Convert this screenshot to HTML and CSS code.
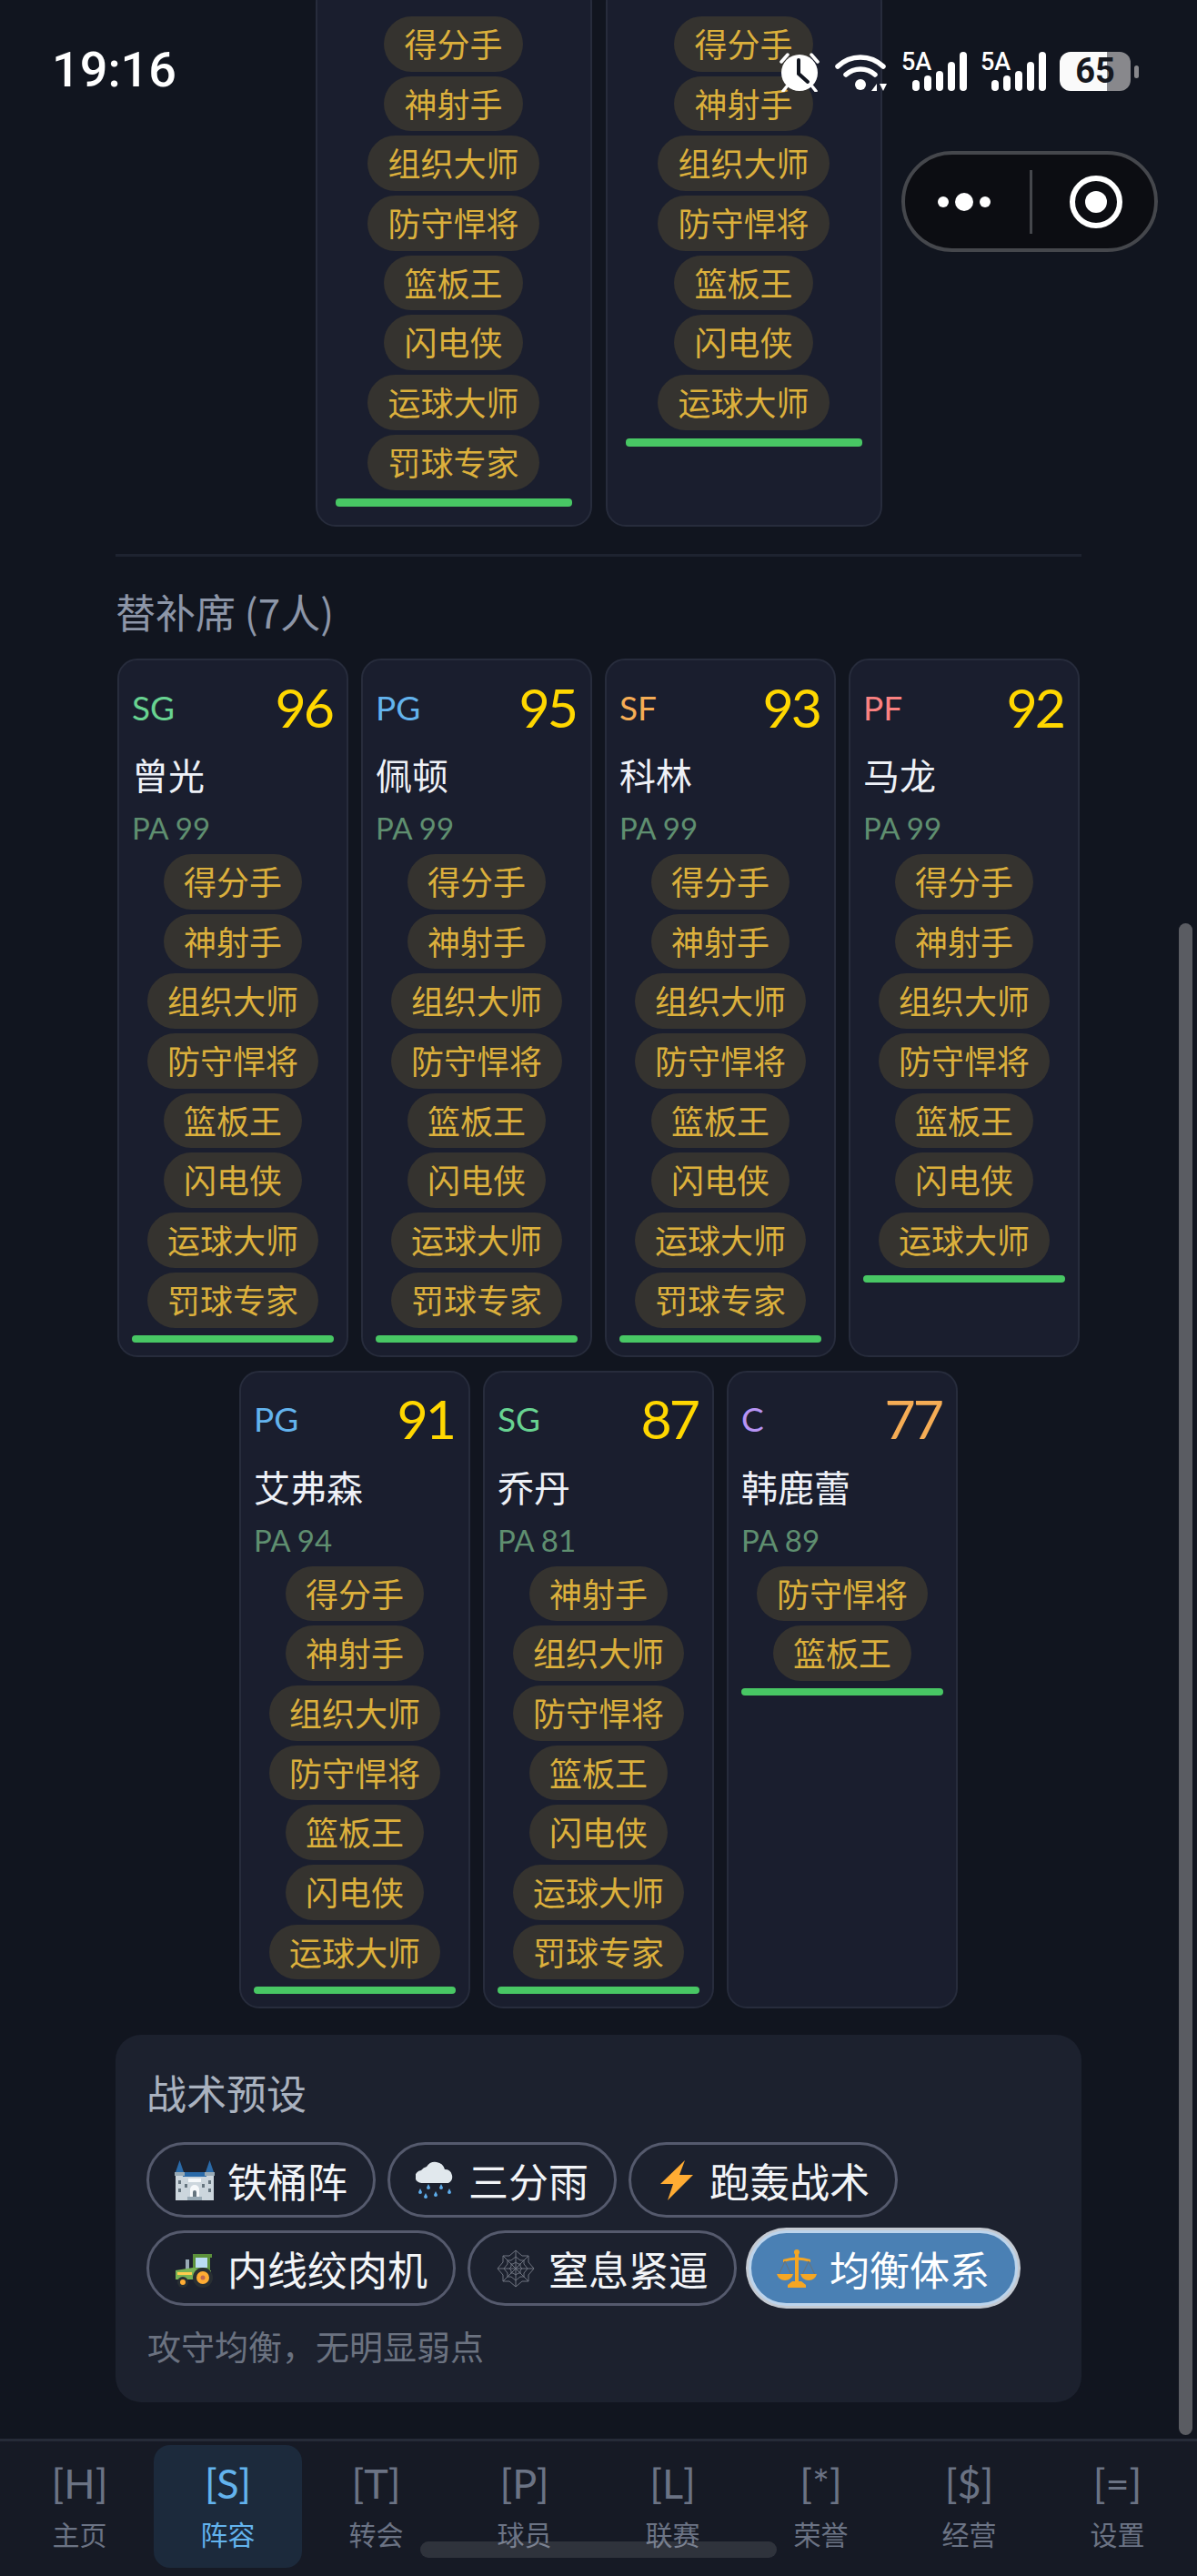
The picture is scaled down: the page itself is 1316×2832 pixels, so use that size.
FILE: index.html
```html
<!DOCTYPE html>
<html lang="zh-CN">
<head>
    <meta charset="UTF-8">
    <title>阵容</title>
    <link rel="stylesheet" href="styles.css">
</head>
<body>
<div class="screen">
    <!-- scrolled content, the starters are cut off at the top -->
    <main class="content">
        <div class="starters">
            <div class="card wide">
                <div class="skills">
                    <span class="skill">得分手</span><span class="skill">神射手</span><span class="skill">组织大师</span><span class="skill">防守悍将</span><span class="skill">篮板王</span><span class="skill">闪电侠</span><span class="skill">运球大师</span><span class="skill">罚球专家</span>
                </div>
                <div class="bar"></div>
            </div>
            <div class="card wide">
                <div class="skills">
                    <span class="skill">得分手</span><span class="skill">神射手</span><span class="skill">组织大师</span><span class="skill">防守悍将</span><span class="skill">篮板王</span><span class="skill">闪电侠</span><span class="skill">运球大师</span>
                </div>
                <div class="bar"></div>
            </div>
        </div>

        <div class="divider"></div>
        <h2 class="bench-title">替补席 (7人)</h2>

        <div class="bench">
            <div class="card">
                <div class="card-head"><span class="pos sg">SG</span><span class="rating">96</span></div>
                <div class="name">曾光</div>
                <div class="pa">PA 99</div>
                <div class="skills">
                    <span class="skill">得分手</span><span class="skill">神射手</span><span class="skill">组织大师</span><span class="skill">防守悍将</span><span class="skill">篮板王</span><span class="skill">闪电侠</span><span class="skill">运球大师</span><span class="skill">罚球专家</span>
                </div>
                <div class="bar"></div>
            </div>
            <div class="card">
                <div class="card-head"><span class="pos pg">PG</span><span class="rating">95</span></div>
                <div class="name">佩顿</div>
                <div class="pa">PA 99</div>
                <div class="skills">
                    <span class="skill">得分手</span><span class="skill">神射手</span><span class="skill">组织大师</span><span class="skill">防守悍将</span><span class="skill">篮板王</span><span class="skill">闪电侠</span><span class="skill">运球大师</span><span class="skill">罚球专家</span>
                </div>
                <div class="bar"></div>
            </div>
            <div class="card">
                <div class="card-head"><span class="pos sf">SF</span><span class="rating">93</span></div>
                <div class="name">科林</div>
                <div class="pa">PA 99</div>
                <div class="skills">
                    <span class="skill">得分手</span><span class="skill">神射手</span><span class="skill">组织大师</span><span class="skill">防守悍将</span><span class="skill">篮板王</span><span class="skill">闪电侠</span><span class="skill">运球大师</span><span class="skill">罚球专家</span>
                </div>
                <div class="bar"></div>
            </div>
            <div class="card">
                <div class="card-head"><span class="pos pf">PF</span><span class="rating">92</span></div>
                <div class="name">马龙</div>
                <div class="pa">PA 99</div>
                <div class="skills">
                    <span class="skill">得分手</span><span class="skill">神射手</span><span class="skill">组织大师</span><span class="skill">防守悍将</span><span class="skill">篮板王</span><span class="skill">闪电侠</span><span class="skill">运球大师</span>
                </div>
                <div class="bar"></div>
            </div>
            <div class="card">
                <div class="card-head"><span class="pos pg">PG</span><span class="rating">91</span></div>
                <div class="name">艾弗森</div>
                <div class="pa">PA 94</div>
                <div class="skills">
                    <span class="skill">得分手</span><span class="skill">神射手</span><span class="skill">组织大师</span><span class="skill">防守悍将</span><span class="skill">篮板王</span><span class="skill">闪电侠</span><span class="skill">运球大师</span>
                </div>
                <div class="bar"></div>
            </div>
            <div class="card">
                <div class="card-head"><span class="pos sg">SG</span><span class="rating">87</span></div>
                <div class="name">乔丹</div>
                <div class="pa">PA 81</div>
                <div class="skills">
                    <span class="skill">神射手</span><span class="skill">组织大师</span><span class="skill">防守悍将</span><span class="skill">篮板王</span><span class="skill">闪电侠</span><span class="skill">运球大师</span><span class="skill">罚球专家</span>
                </div>
                <div class="bar"></div>
            </div>
            <div class="card">
                <div class="card-head"><span class="pos c">C</span><span class="rating low">77</span></div>
                <div class="name">韩鹿蕾</div>
                <div class="pa">PA 89</div>
                <div class="skills">
                    <span class="skill">防守悍将</span><span class="skill">篮板王</span>
                </div>
                <div class="bar"></div>
            </div>
        </div>

        <section class="presets">
            <h3 class="presets-title">战术预设</h3>
            <div class="preset-list">
                <button class="preset">
                    <svg class="emoji" viewBox="0 0 44 44">
                        <path d="M1 44V16h42v28z" fill="#ccd6dd"/>
                        <path d="M9 13h26v5H9z" fill="#2a6aa8"/>
                        <path d="M1 13 5.500 0 10 13zM34 13 38.500 0 43 13z" fill="#2a6aa8"/>
                        <path d="M0 13h11v4H0zM33 13h11v4H33z" fill="#99aab5"/>
                        <path d="M17 44V32a5 5 0 0 1 10 0v12z" fill="#f5f8fa"/>
                        <path d="M20 44v-9a2 2 0 0 1 4 0v9z" fill="#66757f"/>
                        <path d="M14 40h16v4H14z" fill="#99aab5"/>
                        <path d="M15 20h14v4H15z" fill="#f5f8fa"/>
                        <path d="M4 22h3v4H4zM37 22h3v4h-3zM4 31h3v4H4zM37 31h3v4h-3zM11 26h3v4h-3zM30 26h3v4h-3z" fill="#66757f"/>
                    </svg>
                    铁桶阵
                </button>
                <button class="preset">
                    <svg class="emoji" viewBox="0 0 44 44">
                        <path d="M7 25a7 7 0 0 1-1-14 10 10 0 0 1 6-4 11 11 0 0 1 20 3 8 8 0 0 1 4 15z" fill="#e1e8ed"/>
                        <path d="M3 35l2-4 2 4a2 2 0 1 1-4 0zM12 30l2-4 2 4a2 2 0 1 1-4 0zM20 38l2-4 2 4a2 2 0 1 1-4 0zM26 30l2-4 2 4a2 2 0 1 1-4 0zM35 35l2-4 2 4a2 2 0 1 1-4 0zM9 40l2-4 2 4a2 2 0 1 1-4 0z" fill="#5dadec"/>
                    </svg>
                    三分雨
                </button>
                <button class="preset">
                    <svg class="emoji" viewBox="0 0 44 44">
                        <path d="M31 0 4 26h14l-6 18 28-28H25z" fill="#ffac33"/>
                    </svg>
                    跑轰战术
                </button>
                <button class="preset">
                    <svg class="emoji" viewBox="0 0 44 44">
                        <path d="M20 6h21v4h-2v14H20z" fill="#5c913b"/>
                        <path d="M23 10h13v11H23z" fill="#bbddf5"/>
                        <path d="M12 12h4v12h-4z" fill="#99aab5"/>
                        <path d="M1 24l19-3 20 3v10H1z" fill="#77b255"/>
                        <path d="M3 26h16v3H3z" fill="#ffcc4d"/>
                        <circle cx="31" cy="32" r="11" fill="#292f33"/>
                        <circle cx="31" cy="32" r="7" fill="#ffac33"/>
                        <circle cx="31" cy="32" r="2.500" fill="#c1694f"/>
                        <circle cx="9" cy="37" r="6" fill="#292f33"/>
                        <circle cx="9" cy="37" r="3" fill="#ffac33"/>
                    </svg>
                    内线绞肉机
                </button>
                <button class="preset">
                    <svg class="emoji web" viewBox="0 0 44 44">
                        <path d="M22 2v40M2 22h40M8 8l28 28M36 8 8 36"/>
                        <path d="M22 2 29 8h7v7l6 7-6 7v7h-7l-7 6-7-6H8v-7L2 22l6-7V8h7z"/>
                        <path d="M22 9l5 4h4v4l4 5-4 5v4h-4l-5 4-5-4h-4v-4l-4-5 4-5v-4h4z"/>
                        <path d="M22 15l3 2h2v3l2 2-2 2v3h-2l-3 2-3-2h-2v-3l-2-2 2-2v-3h2z"/>
                    </svg>
                    窒息紧逼
                </button>
                <button class="preset active">
                    <svg class="emoji" viewBox="0 0 44 44">
                        <circle cx="22" cy="4" r="3" fill="#f5a623"/>
                        <path d="M20 4h4v34h-4zM12 40l5-4h10l5 4v3H12z" fill="#f5a623"/>
                        <path d="M7 12q15-5 30 0v3q-15-5-30 0z" fill="#f5a623"/>
                        <path d="M9 14 2 29M9 14l7 15M35 14l-7 15M35 14l7 15" stroke="#66757f" stroke-width="1.200" fill="none"/>
                        <path d="M0 28h18q-2 7-9 7t-9-7zM26 28h18q-2 7-9 7t-9-7z" fill="#f5a623"/>
                    </svg>
                    均衡体系
                </button>
            </div>
            <p class="preset-desc">攻守均衡，无明显弱点</p>
        </section>
    </main>

    <nav class="tabbar">
        <a class="tab"><span class="tab-icon">[H]</span><span class="tab-label">主页</span></a>
        <a class="tab active"><span class="tab-icon">[S]</span><span class="tab-label">阵容</span></a>
        <a class="tab"><span class="tab-icon">[T]</span><span class="tab-label">转会</span></a>
        <a class="tab"><span class="tab-icon">[P]</span><span class="tab-label">球员</span></a>
        <a class="tab"><span class="tab-icon">[L]</span><span class="tab-label">联赛</span></a>
        <a class="tab"><span class="tab-icon">[*]</span><span class="tab-label">荣誉</span></a>
        <a class="tab"><span class="tab-icon">[$]</span><span class="tab-label">经营</span></a>
        <a class="tab"><span class="tab-icon">[=]</span><span class="tab-label">设置</span></a>
    </nav>

    <div class="scrollbar"></div>
    <div class="home-bar"></div>

    <!-- phone status bar -->
    <div class="statusbar">
        <span class="clock">19:16</span>
        <div class="status-icons">
            <svg class="alarm" viewBox="0 0 44 44">
                <path d="M2 11 9 3M42 11l-7-8M8 38l-4 5M36 38l4 5" stroke="#fff" stroke-width="3.500" stroke-linecap="round"/>
                <circle cx="22" cy="23" r="20" fill="#fff"/>
                <path d="M21 9v15l10 9" stroke="#11151f" stroke-width="4" fill="none" stroke-linecap="round"/>
            </svg>
            <svg class="wifi" viewBox="0 0 58 44">
                <path d="M3 16a36 36 0 0 1 50 0M12 25a24 24 0 0 1 32 0" stroke="#fff" stroke-width="5.500" fill="none" stroke-linecap="round"/>
                <circle cx="28" cy="36" r="6" fill="#fff"/>
                <path d="M40 43l6-8v8zM49 35h8l-4 8z" fill="#fff"/>
            </svg>
            <div class="signal">
                <span class="net">5A</span>
                <span class="sig s1"></span><span class="sig s2"></span><span class="sig s3"></span><span class="sig s4"></span><span class="sig s5"></span>
            </div>
            <div class="signal">
                <span class="net">5A</span>
                <span class="sig s1"></span><span class="sig s2"></span><span class="sig s3"></span><span class="sig s4"></span><span class="sig s5"></span>
            </div>
            <div class="battery"><span class="battery-num">65</span></div>
            <span class="battery-nub"></span>
        </div>
    </div>

    <!-- mini program capsule -->
    <div class="capsule">
        <div class="capsule-dots"><span class="dot"></span><span class="dot big"></span><span class="dot"></span></div>
        <span class="capsule-line"></span>
        <div class="capsule-rec"><span class="rec-inner"></span></div>
    </div>
</div>
</body>
</html>
```
FILE: styles.css
```css
* {
    box-sizing: border-box;
}
body {
    margin: 0;
    background-color: #11151f;
    font-family: "Noto Sans CJK SC", sans-serif;
}
.screen {
    position: relative;
    width: 1316px;
    height: 2832px;
    overflow: hidden;
    display: flex;
    flex-direction: column;
}
.content {
    flex: 1;
    padding: 0 127px;
    overflow: hidden;
}

/* starters */
.starters {
    display: flex;
    justify-content: center;
    gap: 15px;
    margin-top: -20px;
}
.card {
    width: 254px;
    padding: 20px 14px 14px;
    display: flex;
    flex-direction: column;
    background-color: #1a1e2e;
    border: 2px solid #272c3c;
    border-radius: 22px;
}
.card.wide {
    width: 304px;
    height: 599px;
    padding: 36px 20px 0;
}
.divider {
    height: 3px;
    margin-top: 30px;
    background-color: #1e2330;
}
.bench-title {
    margin: 31px 0 23px;
    font-size: 44px;
    line-height: 58px;
    font-weight: 400;
    color: #8d96a8;
}

/* bench */
.bench {
    display: flex;
    flex-wrap: wrap;
    justify-content: center;
    gap: 15px 14px;
}
.card-head {
    display: flex;
    justify-content: space-between;
    align-items: center;
    height: 62px;
}
.pos {
    font-family: Lato, sans-serif;
    font-size: 37px;
    font-weight: 400;
}
.pos.sg { color: #68d391; }
.pos.pg { color: #63b3ed; }
.pos.sf { color: #f6ad55; }
.pos.pf { color: #fc8181; }
.pos.c { color: #b794f4; }
.rating {
    margin-right: 2px;
    font-family: Lato, sans-serif;
    font-size: 59px;
    font-weight: 400;
    color: #ffd700;
    letter-spacing: -3px;
}
.rating.low {
    color: #f6ad55;
}
.name {
    margin-top: 14px;
    font-size: 40px;
    line-height: 58px;
    color: #eef1f7;
}
.pa {
    margin-top: 10px;
    font-family: Lato, sans-serif;
    font-size: 33px;
    font-weight: 400;
    line-height: 40px;
    color: #5f8f70;
}
.skills {
    margin-top: 9px;
    display: flex;
    flex-direction: column;
    align-items: center;
    gap: 5px;
}
.card.wide .skills {
    margin-top: 0;
}
.skill {
    height: 60.7px;
    padding: 0 22px;
    border-radius: 31px;
    background-color: #35332f;
    color: #dcb03c;
    font-size: 36px;
    line-height: 59px;
    white-space: nowrap;
}
.bar {
    height: 8px;
    margin-top: 8px;
    flex-shrink: 0;
    border-radius: 4px;
    background-color: #48c764;
}
.card.wide .bar {
    height: 9px;
    margin-top: 9px;
}

/* presets */
.presets {
    margin-top: 29px;
    height: 404px;
    padding: 33px 34px 0;
    background-color: #1c212e;
    border-radius: 28px;
}
.presets-title {
    margin: 0;
    font-size: 44px;
    line-height: 60px;
    font-weight: 400;
    color: #aab2bf;
}
.preset-list {
    margin-top: 25px;
    display: flex;
    flex-wrap: wrap;
    gap: 14px 13px;
}
.preset {
    height: 83px;
    padding: 0 28px;
    display: flex;
    align-items: center;
    gap: 14px;
    background: transparent;
    border: 3px solid #555a6d;
    border-radius: 42px;
    color: #f2f4f7;
    font-family: inherit;
    font-size: 44px;
    white-space: nowrap;
}
.preset.active {
    background-color: #4a80b4;
    border-color: #bcd4ec;
    box-shadow: 0 0 0 3px #c4cad2;
    color: #fff;
}
.emoji {
    width: 44px;
    height: 44px;
    flex-shrink: 0;
}
.web {
    fill: none;
    stroke: #6f7480;
    stroke-width: 1;
}
.preset-desc {
    margin: 18px 0 0 1px;
    font-size: 37px;
    line-height: 52px;
    color: #6b7280;
}

/* bottom tabs */
.tabbar {
    flex-shrink: 0;
    height: 151px;
    padding: 4px 6px 9px;
    display: flex;
    background-color: #161a25;
    border-top: 3px solid #262b38;
}
.tab {
    width: 163px;
    padding-top: 15px;
    display: flex;
    flex-direction: column;
    align-items: center;
    border-radius: 18px;
    color: #6b7384;
}
.tab.active {
    background-color: #1c2a3c;
    color: #63b3ed;
}
.tab-icon {
    font-family: Lato, sans-serif;
    font-size: 45px;
    font-weight: 400;
    line-height: 54px;
}
.tab-label {
    margin-top: 8px;
    font-size: 30px;
    line-height: 40px;
}
.scrollbar {
    position: absolute;
    left: 1296px;
    top: 1015px;
    width: 15px;
    height: 1662px;
    border-radius: 8px;
    background-color: #5a5c62;
}
.home-bar {
    position: absolute;
    left: 462px;
    top: 2794px;
    width: 392px;
    height: 18px;
    border-radius: 9px;
    background-color: rgba(255,255,255,0.11);
}

/* status bar */
.statusbar {
    position: absolute;
    left: 0;
    top: 0;
    width: 100%;
}
.clock {
    position: absolute;
    left: 57px;
    top: 45px;
    font-family: Roboto, sans-serif;
    font-size: 54px;
    line-height: 64px;
    font-weight: 500;
    color: #fff;
}
.status-icons {
    position: absolute;
    left: 857px;
    top: 57px;
    height: 43px;
    display: flex;
    align-items: flex-start;
}
.alarm {
    width: 44px;
    height: 44px;
}
.wifi {
    width: 58px;
    height: 44px;
    margin-left: 17px;
}
.signal {
    position: relative;
    width: 72px;
    height: 43px;
    margin-left: 15px;
    display: flex;
    align-items: flex-end;
    justify-content: flex-end;
    gap: 5px;
}
.net {
    position: absolute;
    left: 0;
    top: -3px;
    font-family: Roboto, sans-serif;
    font-size: 27px;
    line-height: 28px;
    font-weight: 500;
    color: #fff;
}
.sig {
    width: 8px;
    border-radius: 4px;
    background-color: #fff;
}
.s1 { height: 12px; }
.s2 { height: 17px; }
.s3 { height: 22px; }
.s4 { height: 32px; }
.s5 { height: 43px; }
.battery {
    width: 78px;
    height: 43px;
    margin-left: 15px;
    border-radius: 12px;
    background: linear-gradient(to right, #fafafa 67%, #88888c 67%);
    text-align: center;
}
.battery-num {
    font-family: Roboto, sans-serif;
    font-size: 38px;
    line-height: 43px;
    font-weight: 700;
    color: #16181f;
}
.battery-nub {
    width: 5px;
    height: 14px;
    margin: 15px 0 0 4px;
    border-radius: 3px;
    background-color: #88888c;
}

/* capsule */
.capsule {
    position: absolute;
    left: 991px;
    top: 166px;
    width: 282px;
    height: 111px;
    display: flex;
    align-items: center;
    background-color: #0c0d12;
    border: 4px solid #45474c;
    border-radius: 56px;
}
.capsule-dots {
    width: 137px;
    padding-right: 8px;
    display: flex;
    align-items: center;
    justify-content: center;
    gap: 7px;
}
.dot {
    width: 12px;
    height: 12px;
    border-radius: 50%;
    background-color: #fff;
}
.dot.big {
    width: 20px;
    height: 20px;
}
.capsule-line {
    width: 3px;
    height: 70px;
    background-color: #45474c;
}
.capsule-rec {
    width: 58px;
    height: 58px;
    margin-left: 41px;
    display: flex;
    align-items: center;
    justify-content: center;
    border: 6px solid #fff;
    border-radius: 50%;
}
.rec-inner {
    width: 24px;
    height: 24px;
    border-radius: 50%;
    background-color: #fff;
}
```
